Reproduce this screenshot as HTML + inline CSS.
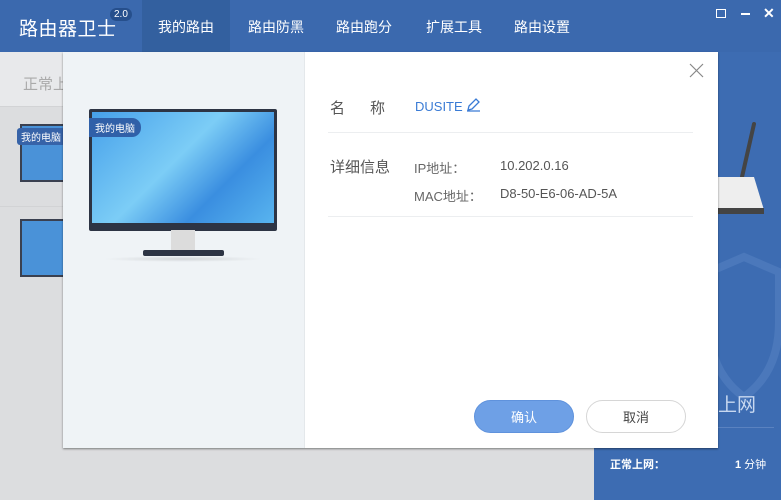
<!DOCTYPE html><html><head><meta charset="utf-8"><style>
*{margin:0;padding:0;box-sizing:border-box}
body{width:781px;height:500px;overflow:hidden;position:relative;background:#dcdddf;font-family:"Liberation Sans","Noto Sans CJK SC",sans-serif}
.hdr{position:absolute;left:0;top:0;width:781px;height:52px;background:#3b69ae}
.logo{position:absolute;left:19px;top:14px;color:#fff;font-size:19px;letter-spacing:0.5px}
.ver{position:absolute;left:110px;top:8px;background:#264f8c;color:#fff;font-size:10px;border-radius:8px;padding:1px 4px}
.tab{position:absolute;top:0;height:52px;line-height:54px;color:#fff;font-size:14px;text-align:center;width:88px}
.side{position:absolute;left:594px;top:52px;width:187px;height:448px;background:#3d6cb2}
.dlg{position:absolute;left:63px;top:52px;width:655px;height:396px;background:#fff;box-shadow:0 1px 2px rgba(0,0,0,.45)}
.lp{position:absolute;left:0;top:0;width:242px;height:396px;background:#eff3f6;border-right:1px solid #e4e8eb}
.t{position:absolute;font-size:14px;color:#555;white-space:nowrap}
.hr{position:absolute;left:265px;width:365px;height:1px;background:#eceef0}
.btn{position:absolute;top:348px;width:100px;height:33px;border-radius:17px;text-align:center;line-height:33px;font-size:13px}
</style></head><body>
<div class="hdr">
<div class="logo">路由器卫士</div><div class="ver">2.0</div>
<div class="tab" style="left:142px;background:#33609f">我的路由</div>
<div class="tab" style="left:232px">路由防黑</div>
<div class="tab" style="left:320px">路由跑分</div>
<div class="tab" style="left:410px">扩展工具</div>
<div class="tab" style="left:498px">路由设置</div>
<div style="position:absolute;left:716px;top:9px;width:10px;height:9px;border:1.5px solid #fff"></div>
<div style="position:absolute;left:741px;top:13px;width:9px;height:2px;background:#fff"></div>
<div style="position:absolute;left:763px;top:5px;color:#fff;font-size:14px;font-weight:bold">✕</div>
</div>
<div style="position:absolute;left:0;top:52px;width:594px;height:55px;background:#e8e9eb;border-bottom:1px solid #d2d3d5"></div>
<div style="position:absolute;left:23px;top:73px;color:#aaa;font-size:15px">正常上</div>
<div style="position:absolute;left:0;top:206px;width:63px;height:1px;background:#d2d3d5"></div>
<div style="position:absolute;left:20px;top:124px;width:45px;height:58px;background:#4a92d8;border:2px solid #3a4050"></div>
<div style="position:absolute;left:17px;top:128px;background:#3763a8;color:#fff;font-size:10px;padding:1px 4px;border-radius:3px">我的电脑</div>
<div style="position:absolute;left:20px;top:219px;width:45px;height:58px;background:#4a92d8;border:2px solid #3a4050"></div>
<div class="side">
<svg style="position:absolute;left:110px;top:70px" width="60" height="110"><line x1="50" y1="2" x2="38" y2="55" stroke="#444" stroke-width="4" stroke-linecap="round"/><path d="M10 55 H 50 L 60 88 H 10 Z" fill="#eee"/><rect x="10" y="86" width="50" height="6" fill="#444"/></svg>
<svg style="position:absolute;left:110px;top:200px" width="80" height="150" opacity=".15"><path d="M5 20 L40 5 L75 20 V70 Q75 120 40 145 Q5 120 5 70 Z" fill="none" stroke="#9cc0ee" stroke-width="8"/></svg>
<div style="position:absolute;left:124px;top:338px;color:#c8d8f0;font-size:19px">上网</div>
<div style="position:absolute;left:10px;top:375px;width:170px;height:1px;background:#5a82c0"></div>
<div style="position:absolute;left:16px;top:404px;color:#fff;font-size:11px;font-weight:bold">正常上网：</div>
<div style="position:absolute;left:141px;top:404px;color:#fff;font-size:11px"><b>1</b> 分钟</div>
</div>
<div class="dlg">
<div class="lp">
<div style="position:absolute;left:26px;top:57px;width:188px;height:122px;background:linear-gradient(135deg,#46a0ea,#7ccdf6 45%,#3a8ee0 70%,#58b4ef);border:3px solid #2d3444;border-bottom-width:8px;border-radius:2px"></div>
<div style="position:absolute;left:26px;top:66px;background:#3060a8;color:#fff;font-size:10px;padding:2px 6px;border-radius:0 9px 9px 0">我的电脑</div>
<div style="position:absolute;left:108px;top:178px;width:24px;height:21px;background:#dcdcdc"></div>
<div style="position:absolute;left:80px;top:198px;width:81px;height:6px;background:#2d3444;border-radius:2px"></div>
<div style="position:absolute;left:40px;top:204px;width:160px;height:6px;background:radial-gradient(ellipse,rgba(0,0,0,.12),transparent 70%)"></div>
</div>
<svg style="position:absolute;left:626px;top:11px" width="15" height="15"><path d="M1 1 L14 14 M14 1 L1 14" stroke="#888" stroke-width="1.2"/></svg>
<div class="t" style="left:267px;top:45px;font-size:15px">名&nbsp;&nbsp;&nbsp;&nbsp;&nbsp;&nbsp;称</div>
<div class="t" style="left:352px;top:46px;color:#3a7bd5;font-size:13px">DUSITE <svg width="15" height="14" style="vertical-align:-1px"><path d="M2 12 L3 8 L10 1 L13 4 L6 11 Z M1 13 H14" fill="none" stroke="#3a7bd5" stroke-width="1.3"/></svg></div>
<div class="hr" style="top:80px"></div>
<div class="t" style="left:267px;top:104px;font-size:15px">详细信息</div>
<div class="t" style="left:351px;top:106px;font-size:13px;color:#666">IP地址：</div>
<div class="t" style="left:437px;top:106px;font-size:13px">10.202.0.16</div>
<div class="t" style="left:351px;top:134px;font-size:13px;color:#666">MAC地址：</div>
<div class="t" style="left:437px;top:134px;font-size:13px">D8-50-E6-06-AD-5A</div>
<div class="hr" style="top:164px"></div>
<div class="btn" style="left:411px;background:#6ea0e6;color:#fff;border:1px solid #5f92dc">确认</div>
<div class="btn" style="left:523px;background:#fff;color:#444;border:1px solid #d6d6d6">取消</div>
</div>
</body></html>
